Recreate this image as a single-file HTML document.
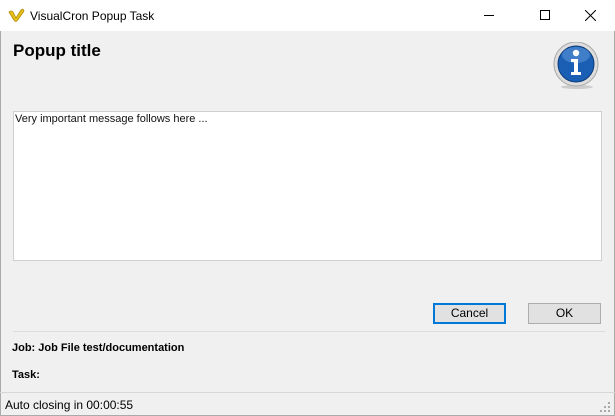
<!DOCTYPE html>
<html><head><style>
*{margin:0;padding:0;box-sizing:border-box}
body{width:615px;height:416px;background:#f0f0f0;font-family:"Liberation Sans",sans-serif;font-size:12px;position:relative;overflow:hidden}
.tb{position:absolute;left:0;top:0;width:615px;height:31px;background:#fff}
.t{position:absolute}
.btn{position:absolute;height:21px;background:#e1e1e1;border:1px solid #adadad;text-align:center;line-height:19px;font-size:12px}
</style></head><body>
<div class="t" style="left:0;top:0;width:615px;height:416px;border:1px solid #aaa;border-top:none"></div>
<div class="tb">
<svg class="t" style="left:8px;top:8px" width="17" height="14" viewBox="0 0 17 14"><path d="M1 4 Q3 2 5 4 L8 10 L13 2 Q15 0 16 3 L9 13 Q7 14 6 12 Z" fill="#e8c21a" stroke="#b08a00" stroke-width="0.8"/></svg>
<div class="t" style="left:30px;top:9px;font-size:12px">VisualCron Popup Task</div>
<div class="t" style="left:484px;top:15px;width:10px;height:1px;background:#000"></div>
<div class="t" style="left:540px;top:10px;width:10px;height:10px;border:1px solid #000"></div>
<svg class="t" style="left:585px;top:10px" width="11" height="11"><path d="M0 0L11 11M11 0L0 11" stroke="#000" stroke-width="1"/></svg>
</div>
<div class="t" style="left:13px;top:41px;font-size:17px;font-weight:bold">Popup title</div>
<svg class="t" style="left:553px;top:42px" width="48" height="48" viewBox="0 0 48 48">
<ellipse cx="24" cy="45" rx="16" ry="2" fill="#ccc"/>
<circle cx="23" cy="22" r="22" fill="#ddd" stroke="#aaa"/>
<circle cx="23" cy="22" r="18" fill="#1a5fb4" stroke="#0d3b7a"/>
<ellipse cx="23" cy="13" rx="14" ry="8" fill="#5a93d8" opacity="0.6"/>
<circle cx="23" cy="11" r="3.2" fill="#fff"/>
<path d="M18 17h7v13h3v3h-10v-3h3v-10h-3z" fill="#fff"/>
</svg>
<div class="t" style="left:13px;top:111px;width:589px;height:150px;background:#fff;border:1px solid #d0d0d0"></div>
<div class="t" style="left:15px;top:113px;font-size:11px;color:#111">Very important message follows here ...</div>
<div class="btn" style="left:433px;top:303px;width:73px;border:2px solid #0078d7;line-height:17px">Cancel</div>
<div class="btn" style="left:528px;top:303px;width:73px">OK</div>
<div class="t" style="left:13px;top:331px;width:592px;height:1px;background:#dcdcdc"></div>
<div class="t" style="left:12px;top:342px;font-weight:bold;font-size:11px">Job: Job File test/documentation</div>
<div class="t" style="left:12px;top:369px;font-weight:bold;font-size:11px">Task:</div>
<div class="t" style="left:0;top:392px;width:615px;height:1px;background:#d7d7d7"></div>
<div class="t" style="left:5px;top:398px;font-size:12px">Auto closing in 00:00:55</div>
<svg class="t" style="left:600px;top:402px" width="12" height="12"><g fill="#aaa"><rect x="8" y="0" width="2" height="2"/><rect x="4" y="4" width="2" height="2"/><rect x="8" y="4" width="2" height="2"/><rect x="0" y="8" width="2" height="2"/><rect x="4" y="8" width="2" height="2"/><rect x="8" y="8" width="2" height="2"/></g></svg>
</body></html>
